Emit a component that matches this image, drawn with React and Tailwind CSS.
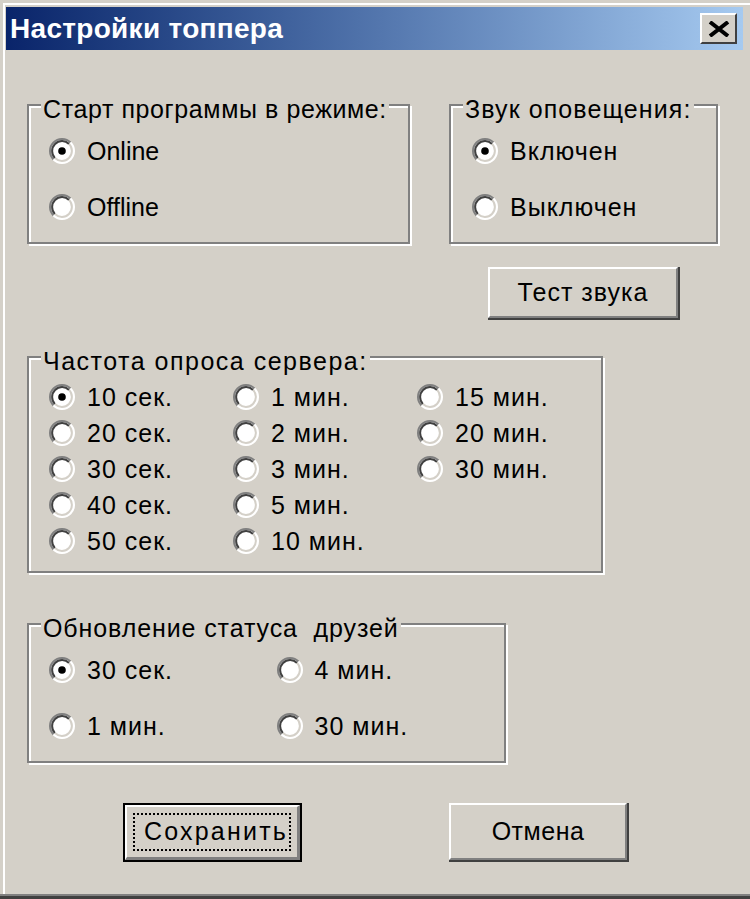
const FONT = "font-['Liberation_Sans',Arial,sans-serif]"

function Radio({ checked }) {
  return (
    <svg width="26" height="26" viewBox="0 0 26 26" className="shrink-0">
      <circle cx="13" cy="13" r="12" fill="#fff" />
      <path d="M4.51 21.49 A12 12 0 0 1 21.49 4.51" fill="none" stroke="#808080" strokeWidth="2" />
      <path d="M21.49 4.51 A12 12 0 0 1 4.51 21.49" fill="none" stroke="#ffffff" strokeWidth="2" />
      <path d="M5.93 20.07 A10 10 0 0 1 20.07 5.93" fill="none" stroke="#404040" strokeWidth="2" />
      <path d="M20.07 5.93 A10 10 0 0 1 5.93 20.07" fill="none" stroke="#d4d0c8" strokeWidth="2" />
      {checked && <circle cx="13" cy="13" r="3.8" fill="#000" />}
    </svg>
  )
}

function Option({ label, checked, h = 'h-[30px]', className = '', track = 'tracking-[1px]' }) {
  return (
    <div className={`flex items-center gap-[12px] ${h} ${className}`}>
      <Radio checked={checked} />
      <span className={`leading-none ${track}`}>{label}</span>
    </div>
  )
}

function Group({ title, track, className, children }) {
  return (
    <div className={`border-2 border-[#808080] shadow-[2px_2px_0_#fff,inset_2px_2px_0_#fff] ${className}`}>
      <div className={`-mt-[9px] ml-[12px] w-fit bg-[#d4d0c8] px-[2px] leading-[25px] whitespace-pre ${track}`}>{title}</div>
      {children}
    </div>
  )
}

function Button({ label, isDefault, track, className }) {
  if (isDefault) {
    return (
      <div className={`border-2 border-black ${className}`}>
        <div className="h-full border-t-2 border-l-2 border-white border-b-[3px] border-r-[3px] border-b-[#808080] border-r-[#808080] bg-[#d4d0c8] p-[6px]">
          <div className={`h-full flex items-center justify-center border-2 border-dotted border-black pl-[8px] ${track}`}>{label}</div>
        </div>
      </div>
    )
  }
  return (
    <div className={`border-b-2 border-r-2 border-[#404040] ${className}`}>
      <div className={`h-full flex items-center justify-center border-t-2 border-l-2 border-white border-b-2 border-r-2 border-b-[#808080] border-r-[#808080] ${track}`}>
        {label}
      </div>
    </div>
  )
}

export default function App() {
  return (
    <div className={`${FONT} w-[750px] h-[899px] bg-[#d4d0c8] text-black text-[25px] pt-[7px] pl-[6px] pr-[7px] shadow-[inset_0_-3px_0_#404040,inset_0_-5px_0_#808080,inset_3px_3px_0_#d4d0c8,inset_5px_5px_0_#fff]`}>
      {/* Title bar */}
      <div className="h-[43px] flex items-center justify-between bg-linear-to-r from-[#0a246a] to-[#a6caf0]">
        <span className="pl-[4px] text-white font-bold text-[28px] leading-none tracking-[0.3px]">Настройки топпера</span>
        <div className="mr-[6px] w-[37px] h-[31px] bg-[#d4d0c8] border-t-2 border-l-2 border-white border-b-2 border-r-2 border-b-[#404040] border-r-[#404040] flex items-center justify-center">
          <svg width="22" height="16" viewBox="0 0 22 16">
            <path d="M2 1 L20 15 M20 1 L2 15" stroke="#000" strokeWidth="4" />
          </svg>
        </div>
      </div>

      {/* Start mode + sound */}
      <div className="flex mt-[54px] ml-[21px]">
        <Group title="Старт программы в режиме:" track="tracking-[0.6px]" className="w-[383px] h-[140px]">
          <div className="pl-[20px]">
            <Option label="Online" checked track="" className="mt-[14px]" />
            <Option label="Offline" track="" className="mt-[26px]" />
          </div>
        </Group>
        <Group title="Звук оповещения:" track="tracking-[1.1px]" className="ml-[39px] w-[269px] h-[140px]">
          <div className="pl-[21px]">
            <Option label="Включен" checked className="mt-[14px]" />
            <Option label="Выключен" className="mt-[26px]" />
          </div>
        </Group>
      </div>

      <Button label="Тест звука" track="tracking-[1px]" className="mt-[23px] ml-[482px] w-[192px] h-[53px]" />

      {/* Poll frequency */}
      <Group title="Частота опроса сервера:" track="tracking-[1.5px]" className="mt-[36px] ml-[21px] w-[576px] h-[217px]">
        <div className="flex pl-[20px] mt-[5px]">
          <div className="w-[185px]">
            <Option label="10 сек." checked h="h-[36px]" />
            <Option label="20 сек." h="h-[36px]" />
            <Option label="30 сек." h="h-[36px]" />
            <Option label="40 сек." h="h-[36px]" />
            <Option label="50 сек." h="h-[36px]" />
          </div>
          <div className="w-[185px]">
            <Option label="1 мин." h="h-[36px]" />
            <Option label="2 мин." h="h-[36px]" />
            <Option label="3 мин." h="h-[36px]" />
            <Option label="5 мин." h="h-[36px]" />
            <Option label="10 мин." h="h-[36px]" />
          </div>
          <div className="w-[185px]">
            <Option label="15 мин." h="h-[36px]" />
            <Option label="20 мин." h="h-[36px]" />
            <Option label="30 мин." h="h-[36px]" />
          </div>
        </div>
      </Group>

      {/* Friends status */}
      <Group title="Обновление статуса  друзей" track="tracking-[0.9px]" className="mt-[50px] ml-[21px] w-[479px] h-[140px]">
        <div className="flex pl-[20px]">
          <div className="w-[228px]">
            <Option label="30 сек." checked className="mt-[14px]" />
            <Option label="1 мин." className="mt-[26px]" />
          </div>
          <div className="w-[228px]">
            <Option label="4 мин." className="mt-[14px]" />
            <Option label="30 мин." className="mt-[26px]" />
          </div>
        </div>
      </Group>

      {/* Dialog buttons */}
      <div className="flex mt-[40px]">
        <Button label="Сохранить" isDefault track="tracking-[2.2px]" className="ml-[117px] w-[179px] h-[59px]" />
        <Button label="Отмена" track="tracking-[0.5px]" className="ml-[147px] w-[180px] h-[59px]" />
      </div>
    </div>
  )
}
